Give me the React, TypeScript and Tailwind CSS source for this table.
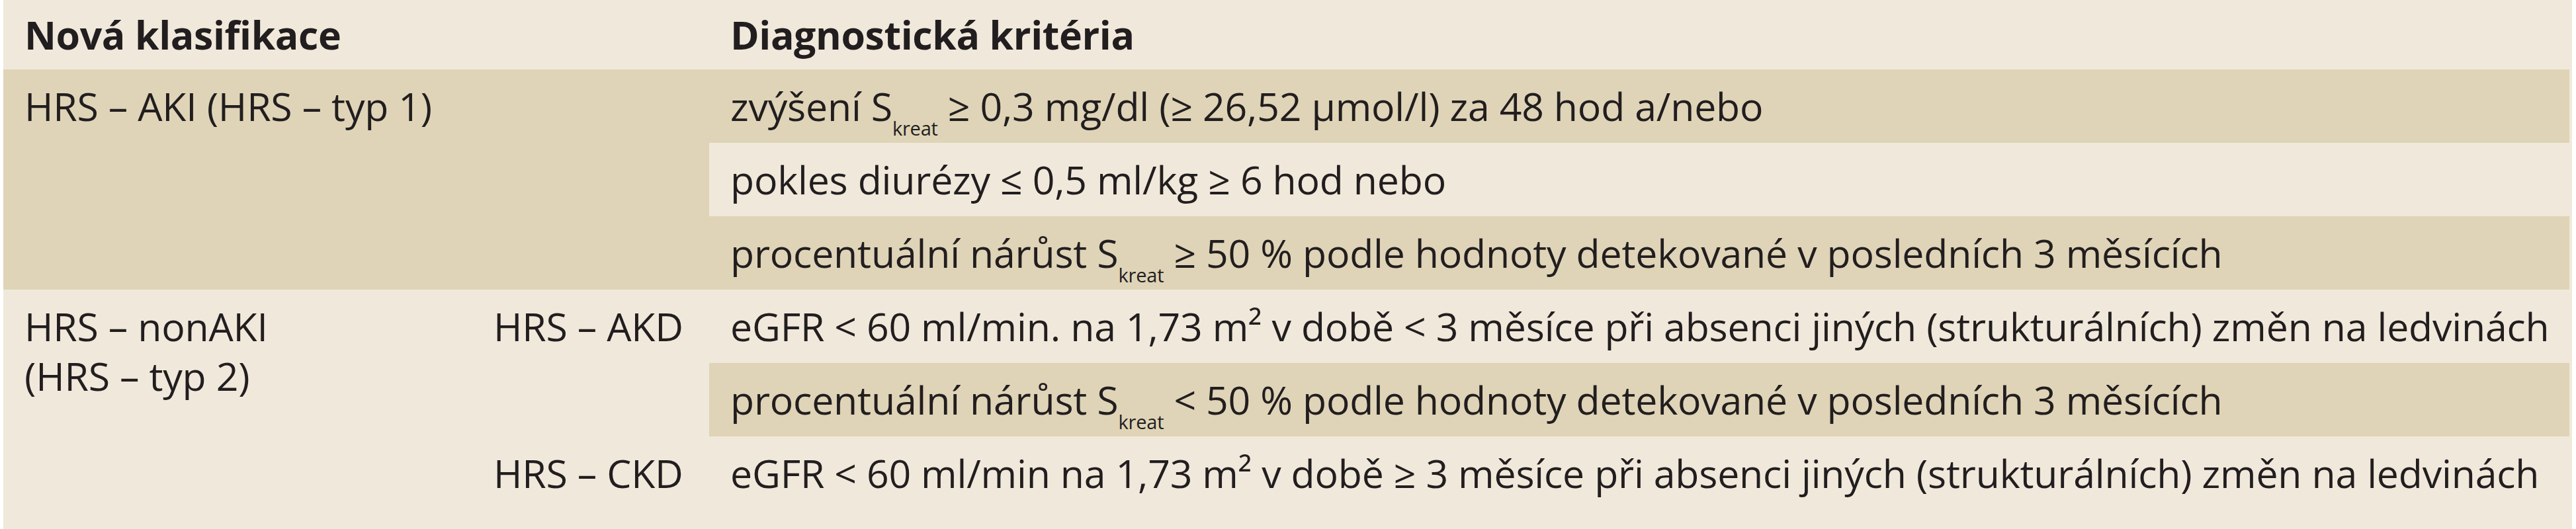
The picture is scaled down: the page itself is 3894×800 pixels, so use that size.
import React from "react";

const Sub = ({ children }: { children: React.ReactNode }) => (
  <span className="relative top-[22px] text-[29px] leading-none">{children}</span>
);

export default function App() {
  const cream = "bg-[#f0e9db]";
  const tan = "bg-[#dfd4b7]";
  return (
    <div className="w-[3894px] h-[800px] bg-white">
      <div
        className="ml-[5px] w-[3883px] h-[800px] bg-[#f0e9db] pr-[4px] pb-[29px] text-[59px] leading-[75px] tracking-[-0.2px] text-[#221e1f]"
        style={{ fontFamily: '"Open Sans", "Noto Sans", sans-serif' }}
      >
        <div className="grid grid-cols-[709px_358px_2812px] grid-rows-[105px_repeat(6,111px)]">
          {/* header */}
          <div className="col-span-2 flex items-center pl-[32px] font-bold tracking-[-0.4px]">Nová klasifikace</div>
          <div className="flex items-center pl-[32px] font-bold tracking-[-0.4px]">Diagnostická kritéria</div>

          {/* group 1 */}
          <div className={`col-span-2 row-span-3 ${tan} pl-[32px] pt-[18px]`}>HRS – AKI (HRS – typ 1)</div>
          <div className={`${tan} flex items-center pl-[32px] whitespace-nowrap`}>
            <span>
              zvýšení S<Sub>kreat</Sub> ≥ 0,3 mg/dl (≥ 26,52 µmol/l) za 48 hod a/nebo
            </span>
          </div>
          <div className={`${cream} flex items-center pl-[32px] whitespace-nowrap`}>
            pokles diurézy ≤ 0,5 ml/kg ≥ 6 hod nebo
          </div>
          <div className={`${tan} flex items-center pl-[32px] whitespace-nowrap`}>
            <span>
              procentuální nárůst S<Sub>kreat</Sub> ≥ 50 % podle hodnoty detekované v posledních 3 měsících
            </span>
          </div>

          {/* group 2 */}
          <div className={`row-span-3 ${cream} pl-[32px] pt-[18px]`}>
            <div>HRS – nonAKI</div>
            <div>(HRS – typ 2)</div>
          </div>
          <div className="flex items-center pl-[32px] whitespace-nowrap">HRS – AKD</div>
          <div className="flex items-center pl-[32px] whitespace-nowrap">
            eGFR &lt; 60 ml/min. na 1,73 m² v době &lt; 3 měsíce při absenci jiných (strukturálních) změn na ledvinách
          </div>
          <div />
          <div className={`${tan} flex items-center pl-[32px] whitespace-nowrap`}>
            <span>
              procentuální nárůst S<Sub>kreat</Sub> &lt; 50 % podle hodnoty detekované v posledních 3 měsících
            </span>
          </div>
          <div className="flex items-center pl-[32px] whitespace-nowrap">HRS – CKD</div>
          <div className="flex items-center pl-[32px] whitespace-nowrap">
            eGFR &lt; 60 ml/min na 1,73 m² v době ≥ 3 měsíce při absenci jiných (strukturálních) změn na ledvinách
          </div>
        </div>
      </div>
    </div>
  );
}
